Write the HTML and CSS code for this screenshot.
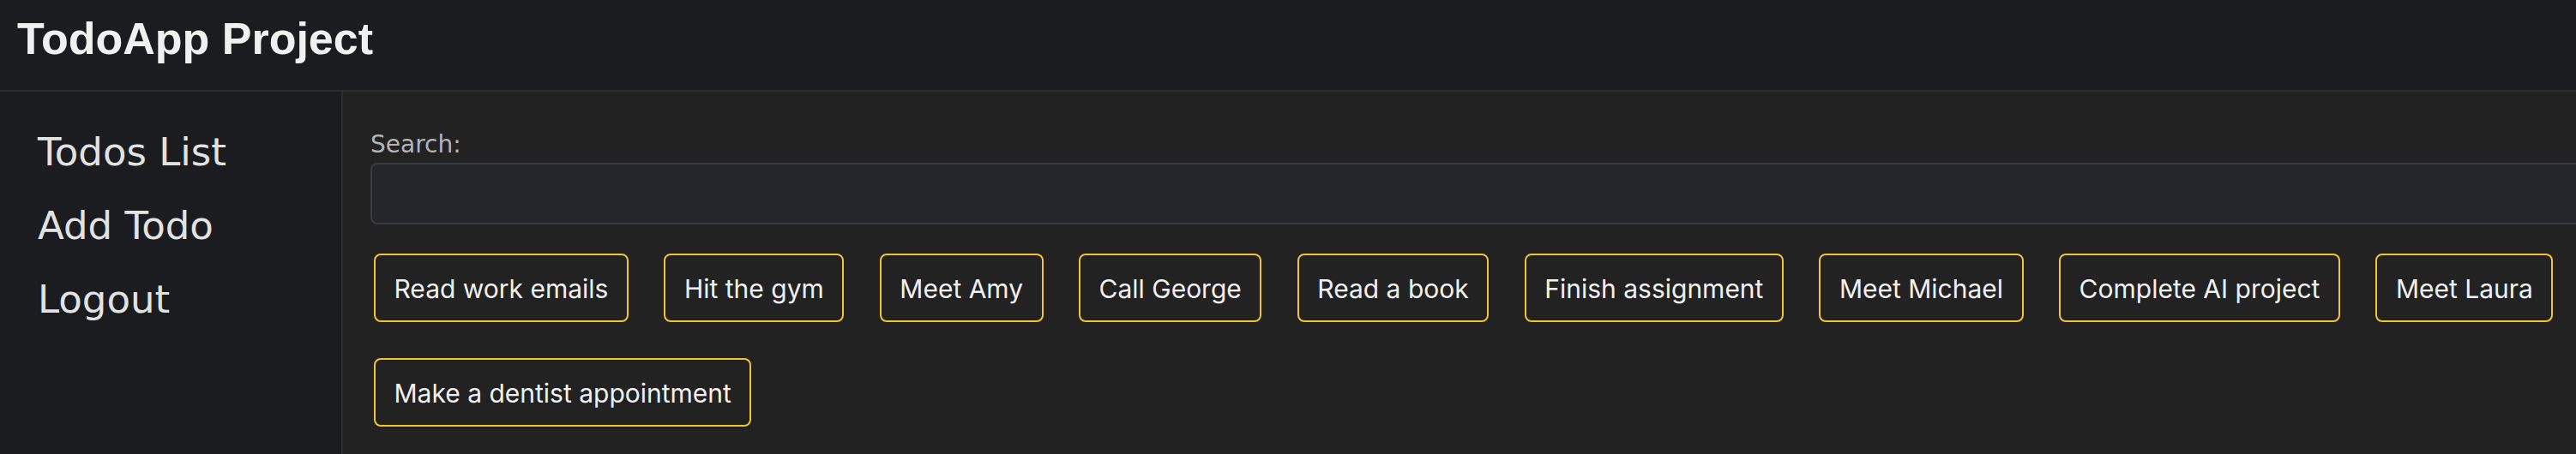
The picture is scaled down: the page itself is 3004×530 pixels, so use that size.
FILE: index.html
```html
<!DOCTYPE html>
<html lang="en">
<head>
<meta charset="utf-8">
<title>TodoApp Project</title>
<link rel="stylesheet" href="styles.css">
</head>
<body>
<div class="app">
  <header class="topbar">
    <h1 class="brand">TodoApp Project</h1>
  </header>
  <div class="layout">
    <nav class="sidebar">
      <a class="nav-link" href="#">Todos List</a>
      <a class="nav-link" href="#">Add Todo</a>
      <a class="nav-link" href="#">Logout</a>
    </nav>
    <main class="content">
      <label class="search-label" for="search">Search:</label>
      <input class="search-input" id="search" type="text">
      <div class="todo-list">
        <button class="todo-chip">Read work emails</button>
        <button class="todo-chip">Hit the gym</button>
        <button class="todo-chip">Meet Amy</button>
        <button class="todo-chip">Call George</button>
        <button class="todo-chip">Read a book</button>
        <button class="todo-chip">Finish assignment</button>
        <button class="todo-chip">Meet Michael</button>
        <button class="todo-chip">Complete AI project</button>
        <button class="todo-chip">Meet Laura</button>
        <button class="todo-chip">Make a dentist appointment</button>
      </div>
    </main>
  </div>
</div>
</body>
</html>
```

FILE: styles.css
```css
* {
  box-sizing: border-box;
}

html, body {
  margin: 0;
  padding: 0;
  background: #222222;
  overflow: hidden;
}

.app {
  display: flex;
  flex-direction: column;
  min-height: 100vh;
}

.topbar {
  background: #1b1c20;
  border-bottom: 2px solid #2d2e33;
  padding: 15px 20px 30px;
  height: 107px;
}

.brand {
  margin: 0;
  font-family: "Liberation Sans", Arial, sans-serif;
  font-weight: 700;
  font-size: 52px;
  line-height: 60px;
  color: #f0f0f0;
}

.layout {
  flex: 1;
  display: flex;
}

.sidebar {
  width: 400px;
  flex: none;
  background: #1b1c20;
  border-right: 2px solid #2d2e33;
  padding: 28px 0 0 44px;
  display: flex;
  flex-direction: column;
  align-items: flex-start;
}

.nav-link {
  font-family: "DejaVu Sans", Verdana, sans-serif;
  font-size: 45px;
  line-height: 52px;
  padding: 17px 0;
  color: #e2e2e2;
  text-decoration: none;
}

.content {
  flex: 1;
  min-width: 0;
  padding: 45px 0 0 32px;
  display: flex;
  flex-direction: column;
  align-items: flex-start;
}

.search-label {
  font-family: "DejaVu Sans", Verdana, sans-serif;
  font-size: 28px;
  line-height: 33px;
  color: #b4b4b6;
}

.search-input {
  display: block;
  margin-top: 5px;
  width: calc(100% + 40px);
  height: 72px;
  background: #25262b;
  border: 2px solid #3a3b41;
  border-radius: 8px;
  outline: none;
}

.todo-list {
  margin-top: 34px;
  padding-left: 4px;
  display: flex;
  flex-wrap: wrap;
  gap: 42px 41.5px;
}

.todo-chip {
  font-family: "Inter", "Roboto", sans-serif;
  font-size: 30px;
  line-height: 38px;
  padding: 20px 21.5px 18px;
  background: #222222;
  color: #f0f0f0;
  border: 2px solid #f2c23a;
  border-radius: 8px;
  cursor: pointer;
}
```
